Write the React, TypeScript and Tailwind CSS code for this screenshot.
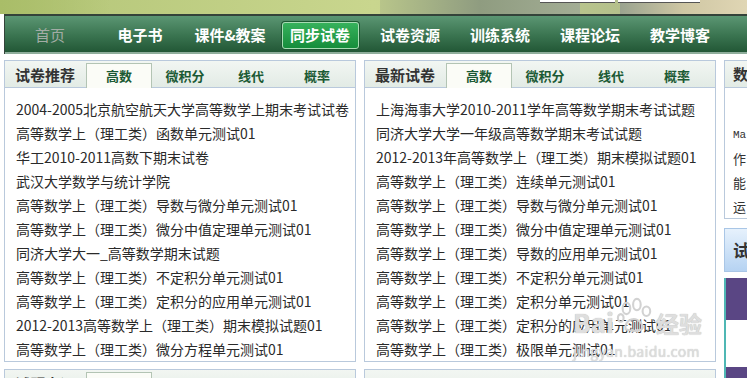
import React from 'react';

const navItems = ['首页', '电子书', '课件&教案', '同步试卷', '试卷资源', '训练系统', '课程论坛', '教学博客', '教学'];

const tabs = ['高数', '微积分', '线代', '概率'];

const leftList = [
  '2004-2005北京航空航天大学高等数学上期末考试试卷',
  '高等数学上（理工类）函数单元测试01',
  '华工2010-2011高数下期末试卷',
  '武汉大学数学与统计学院',
  '高等数学上（理工类）导数与微分单元测试01',
  '高等数学上（理工类）微分中值定理单元测试01',
  '同济大学大一_高等数学期末试题',
  '高等数学上（理工类）不定积分单元测试01',
  '高等数学上（理工类）定积分的应用单元测试01',
  '2012-2013高等数学上（理工类）期末模拟试题01',
  '高等数学上（理工类）微分方程单元测试01',
];

const rightList = [
  '上海海事大学2010-2011学年高等数学期末考试试题',
  '同济大学大学一年级高等数学期末考试试题',
  '2012-2013年高等数学上（理工类）期末模拟试题01',
  '高等数学上（理工类）连续单元测试01',
  '高等数学上（理工类）导数与微分单元测试01',
  '高等数学上（理工类）微分中值定理单元测试01',
  '高等数学上（理工类）导数的应用单元测试01',
  '高等数学上（理工类）不定积分单元测试01',
  '高等数学上（理工类）定积分单元测试01',
  '高等数学上（理工类）定积分的应用单元测试01',
  '高等数学上（理工类）极限单元测试01',
];

const PanelHeader: React.FC<{ title: string }> = ({ title }) => (
  <div className="flex h-[27px] items-end border-b border-[#b9c9dc] bg-gradient-to-b from-[#f2f6f2] to-[#e2ebe5]">
    <div className="w-[81px] self-center pl-[10px] text-[15px] leading-none font-bold text-[#333]">
      {title}
    </div>
    {tabs.map((t, i) => (
      <div
        key={t}
        className={`relative top-[1px] flex h-[25px] w-[66px] items-center justify-center text-[13px] font-bold text-[#1b5a34] ${
          i === 0 ? 'border border-b-0 border-[#b3c4b4] bg-[#fbfcf7]' : ''
        }`}
      >
        {t}
      </div>
    ))}
  </div>
);

const ListPanel: React.FC<{ title: string; items: string[]; children?: React.ReactNode }> = ({
  title,
  items,
  children,
}) => (
  <div className="relative h-[302px] w-[352px] shrink-0 overflow-hidden border border-[#b9c9dc] bg-white">
    <PanelHeader title={title} />
    <ul className="pt-[9px] pl-[11px]">
      {items.map((it, i) => (
        <li key={i} className="h-[24px] text-[14px] leading-[24px] whitespace-nowrap text-[#2a2a2a]">
          {it}
        </li>
      ))}
    </ul>
    {children}
  </div>
);

// baidu jingyan watermark over the list
const Watermark = () => (
  <div className="pointer-events-none absolute top-[236px] left-[208px] whitespace-nowrap text-[#dedede]">
    <div className="flex items-end">
      <span className="text-[26px] leading-none font-bold [text-shadow:0_0_1px_#b0b0b0]">Bai</span>
      <svg width="42" height="38" viewBox="0 0 40 40" className="shrink-0">
        <g fill="none" stroke="#d2d2d2" strokeWidth="2.2">
          <ellipse cx="11" cy="12" rx="4" ry="6" />
          <ellipse cx="22" cy="8" rx="4" ry="6" />
          <ellipse cx="32" cy="15" rx="4" ry="5" />
          <ellipse cx="5" cy="22" rx="3" ry="4" />
          <path d="M10 34 C 8 24, 22 18, 28 30 C 30 36, 20 37, 10 34 Z" />
        </g>
      </svg>
      <span className="text-[23px] leading-none font-bold [text-shadow:0_0_1px_#b0b0b0]">经验</span>
    </div>
    <div className="mt-[9px] text-[14px] leading-none tracking-wide [text-shadow:0_0_1px_#bbb]">
      jingyan.baidu.com
    </div>
  </div>
);

export default function App() {
  return (
    <div className="relative h-[378px] w-[747px] overflow-hidden bg-white font-['Noto_Sans_CJK_SC',sans-serif]">
      {/* banner */}
      <div className="relative h-[14px] bg-gradient-to-r from-[#b3c577] via-[#c9d68e] to-[#aab58a]">
        <div className="absolute top-0 left-[0px] h-[14px] w-[110px] bg-gradient-to-r from-[#a9bd68] to-transparent" />
        <div className="absolute top-0 left-[380px] h-[14px] w-[200px] bg-gradient-to-r from-[#b8c58a] via-[#8f9c80] to-[#a3ad95]" />
        <div className="absolute top-0 left-[620px] h-[14px] w-[127px] bg-gradient-to-r from-[#9aa38f] via-[#cfc7a4] to-[#e0d6b4]" />
        <div className="absolute top-0 left-[540px] h-[3px] w-[75px] border-b border-[#555] bg-white" />
        <div className="absolute top-0 left-[618px] h-[3px] w-[82px] border-b border-[#555] bg-white" />
      </div>

      {/* nav */}
      <div className="ml-[4px] flex h-[40px] border-t-2 border-l border-[#34433a] bg-gradient-to-b from-[#5b9673] via-[#3b7551] to-[#1f5433] shadow-[inset_0_-2px_0_#8fae9c]">
        {navItems.map((n, i) => (
          <div key={i} className="flex w-[90px] shrink-0 items-center justify-center">
            {n === '同步试卷' ? (
              <div className="flex h-[27px] w-[77px] items-center justify-center rounded-[3px] border border-[#a7dcb3] bg-gradient-to-b from-[#36b25c] to-[#148d3b] text-[15px] font-bold text-white shadow-[0_0_0_1px_#1d5a33]">
                {n}
              </div>
            ) : (
              <span
                className={`text-[15px] font-bold ${
                  i === 0 || i === 8 ? 'font-normal text-[#a3aca5]' : 'text-white'
                }`}
              >
                {n}
              </span>
            )}
          </div>
        ))}
      </div>

      {/* content */}
      <div className="mt-[6px] ml-[4px] flex gap-[8px]">
        <div className="flex flex-col gap-[7px]">
          <ListPanel title="试卷推荐" items={leftList} />
          <div className="h-[40px] w-[352px] border border-[#b9c9dc]">
            <PanelHeader title="试题点评" />
          </div>
        </div>
        <div className="flex flex-col gap-[7px]">
          <ListPanel title="最新试卷" items={rightList}>
            <Watermark />
          </ListPanel>
          <div className="h-[40px] w-[352px] border border-[#b9c9dc] bg-gradient-to-b from-[#f2f6f2] to-[#e2ebe5]" />
        </div>

        {/* third column */}
        <div className="flex w-[200px] shrink-0 flex-col">
          <div className="h-[159px] border border-[#b9c9dc] bg-white">
            <div className="flex h-[27px] items-center border-b border-[#b9c9dc] bg-gradient-to-b from-[#f2f6f2] to-[#e2ebe5] pl-[8px] text-[15px] font-bold text-[#333]">
              数学软件
            </div>
            <div className="pt-[35px] pl-[8px] text-[13px] leading-[24px] text-[#333]">
              <div className="font-['Liberation_Mono',monospace] text-[11px]">Matlab</div>
              <div>作</div>
              <div>能</div>
              <div>运</div>
            </div>
          </div>
          <div className="mt-[9px] flex h-[44px] items-center border border-[#a9c6e6] bg-gradient-to-b from-[#e6f1fc] to-[#b6d3f2] pl-[8px] text-[17px] font-bold text-[#333]">
            试题
          </div>
          <div className="mt-[6px] flex flex-col border-l-2 border-[#4fb7b4]">
            <div className="h-[42px] bg-[#5a4684]" />
            <div className="h-[47px] bg-white" />
            <div className="h-[40px] bg-[#5a4684]" />
          </div>
        </div>
      </div>
    </div>
  );
}
